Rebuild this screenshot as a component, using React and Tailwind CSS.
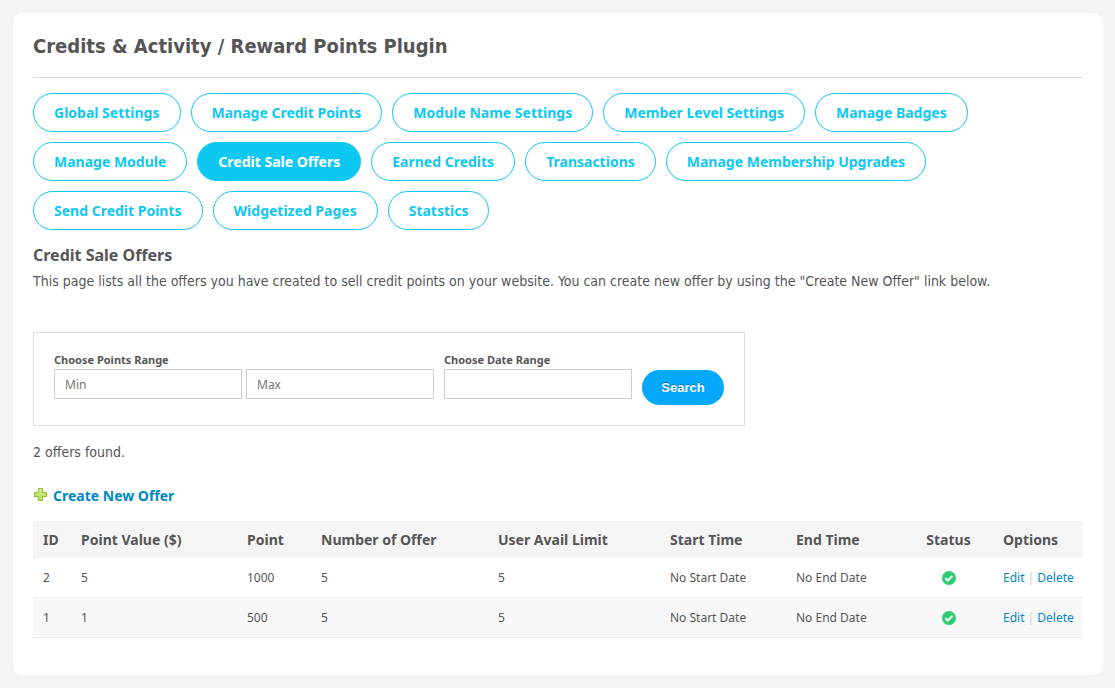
import { clsx } from 'clsx'

const TABS = [
    'Global Settings',
    'Manage Credit Points',
    'Module Name Settings',
    'Member Level Settings',
    'Manage Badges',
    'Manage Module',
    'Credit Sale Offers',
    'Earned Credits',
    'Transactions',
    'Manage Membership Upgrades',
    'Send Credit Points',
    'Widgetized Pages',
    'Statstics',
]

const COLUMNS = [
    { label: 'ID', width: 'w-[38px]' },
    { label: 'Point Value ($)', width: 'w-[166px]' },
    { label: 'Point', width: 'w-[74px]' },
    { label: 'Number of Offer', width: 'w-[177px]' },
    { label: 'User Avail Limit', width: 'w-[172px]' },
    { label: 'Start Time', width: 'w-[126px]' },
    { label: 'End Time', width: 'w-[118px]' },
    { label: 'Status', width: 'w-[89px]', center: true },
    { label: 'Options', width: 'w-[90px]' },
]

const OFFERS = [
    { id: 2, value: 5, point: 1000, offers: 5, limit: 5, start: 'No Start Date', end: 'No End Date' },
    { id: 1, value: 1, point: 500, offers: 5, limit: 5, start: 'No Start Date', end: 'No End Date' },
]

function CheckIcon() {
    return (
        <svg viewBox="0 0 14 14" className="mx-auto h-3.5 w-3.5" role="img" aria-label="Enabled">
            <circle cx="7" cy="7" r="7" fill="#2ecc71" />
            <path d="M3.4 7.2 5.9 9.5 10.5 4.9" fill="none" stroke="#fff" strokeWidth="2" />
        </svg>
    )
}

function PlusIcon() {
    return (
        <svg viewBox="0 0 16 16" className="h-4 w-4" aria-hidden="true">
            <defs>
                <linearGradient id="plus-fill" x1="0" y1="0" x2="0" y2="1">
                    <stop offset="0" stopColor="#d3ee8e" />
                    <stop offset="1" stopColor="#b4dc55" />
                </linearGradient>
            </defs>
            <path
                d="M5.5 .5h4v4h4v4h-4v4h-4v-4h-4v-4h4z"
                fill="url(#plus-fill)"
                stroke="#92bf38"
                strokeLinejoin="round"
            />
        </svg>
    )
}

function Tabs({ active }) {
    return (
        <nav className="mt-[15px] flex flex-wrap gap-2.5">
            {TABS.map(tab => (
                <a
                    key={tab}
                    href="#"
                    className={clsx(
                        'rounded-full border border-[#0ec8f2] px-5 py-2 text-sm leading-[21px] font-bold',
                        tab === active ? 'bg-[#0ec8f2] text-white' : 'text-[#0ec8f2]'
                    )}
                >
                    {tab}
                </a>
            ))}
        </nav>
    )
}

function SearchForm() {
    const label = 'mb-0.5 block text-[11px] leading-[14px] font-bold'
    const input = 'h-[30px] w-[188px] border border-[#ccc] px-2.5 text-xs text-[#555] placeholder:text-[#757575]'

    return (
        <form className="mt-10 flex w-fit items-start gap-2.5 border border-[#ddd] p-5">
            <div>
                <label htmlFor="points-min" className={label}>
                    Choose Points Range
                </label>
                <div className="flex gap-1">
                    <input id="points-min" type="text" placeholder="Min" className={input} />
                    <input type="text" placeholder="Max" aria-label="Max points" className={input} />
                </div>
            </div>
            <div>
                <label htmlFor="date-range" className={label}>
                    Choose Date Range
                </label>
                <input id="date-range" type="text" className={input} />
            </div>
            <button
                type="button"
                className="mt-[17px] h-[35px] w-[82px] rounded-full bg-[#05a8fa] font-['Liberation_Sans',sans-serif] text-[13px] font-bold text-white [text-shadow:0_-1px_0_rgba(0,0,0,0.3)]"
            >
                Search
            </button>
        </form>
    )
}

function OffersTable() {
    return (
        <table className="mt-[15px] w-full table-fixed border-separate border-spacing-0 text-left text-xs">
            <thead>
                <tr className="h-[37px] bg-[#f5f5f5] text-sm">
                    {COLUMNS.map(col => (
                        <th
                            key={col.label}
                            className={clsx('px-2.5 font-bold whitespace-nowrap', col.width, col.center && 'text-center')}
                        >
                            {col.label}
                        </th>
                    ))}
                </tr>
            </thead>
            <tbody>
                {OFFERS.map(offer => (
                    <tr key={offer.id} className="h-10 even:bg-[#f8f8f8] [&>td]:border-b [&>td]:border-[#eee]">
                        <td className="px-2.5">{offer.id}</td>
                        <td className="px-2.5">{offer.value}</td>
                        <td className="px-2.5">{offer.point}</td>
                        <td className="px-2.5">{offer.offers}</td>
                        <td className="px-2.5">{offer.limit}</td>
                        <td className="px-2.5">{offer.start}</td>
                        <td className="px-2.5">{offer.end}</td>
                        <td className="px-2.5">
                            <CheckIcon />
                        </td>
                        <td className="pl-2.5 whitespace-nowrap text-[#ccc]">
                            <a href="#" className="text-[#0087c3]">Edit</a>
                            {' | '}
                            <a href="#" className="text-[#0087c3]">Delete</a>
                        </td>
                    </tr>
                ))}
            </tbody>
        </table>
    )
}

export default function App() {
    return (
        <div className="min-h-screen bg-[#f4f4f4] p-[13px] pr-3 font-['Noto_Sans',sans-serif] text-[#555]">
            <main className="rounded-[10px] bg-white px-5 pt-5 pb-[37px]">
                <h2 className="border-b border-[#ddd] pb-[18px] font-['DejaVu_Sans_Condensed',sans-serif] text-xl leading-[26px] font-bold">
                    Credits &amp; Activity / Reward Points Plugin
                </h2>

                <Tabs active="Credit Sale Offers" />

                <h3 className="mt-[15px] text-base leading-5 font-bold">Credit Sale Offers</h3>
                <p className="mt-[5px] font-['DejaVu_Sans_Condensed',sans-serif] text-sm leading-[22px]">
                    This page lists all the offers you have created to sell credit points on your website. You can
                    create new offer by using the "Create New Offer" link below.
                </p>

                <SearchForm />

                <p className="mt-4 font-['DejaVu_Sans_Condensed',sans-serif] text-sm leading-5">2 offers found.</p>

                <a href="#" className="mt-6 flex w-fit items-center gap-1 text-sm leading-5 font-bold text-[#0087c3]">
                    <PlusIcon />
                    Create New Offer
                </a>

                <OffersTable />
            </main>
        </div>
    )
}
